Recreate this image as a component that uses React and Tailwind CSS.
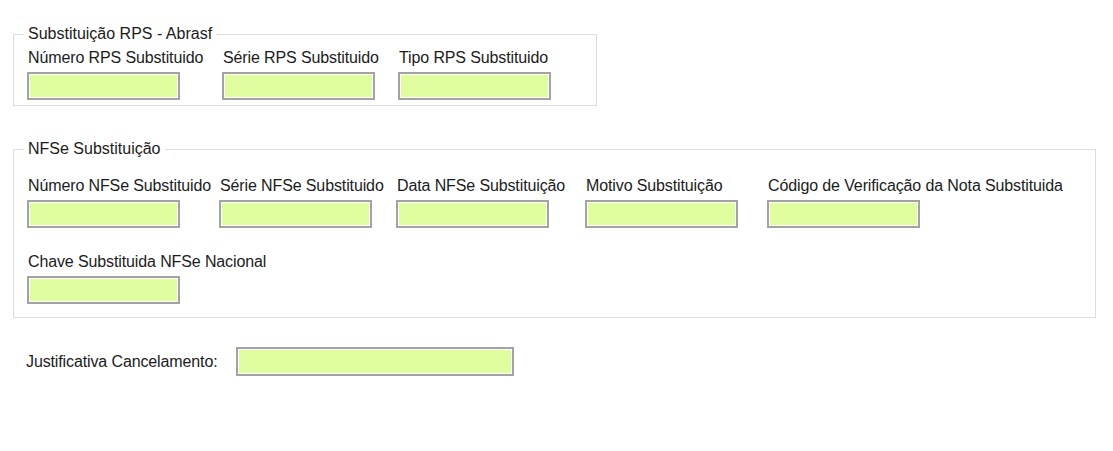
import React from 'react';

const font = { fontFamily: '"Liberation Sans", Arial, sans-serif' };

const Field = ({ label, width }) => (
  <div className={`flex flex-col shrink-0 ${width}`}>
    <span className="text-[16px] leading-[20px] tracking-[-0.12px] whitespace-nowrap pl-[1px]">{label}</span>
    <div className="mt-[4px] w-[153px] h-[28px] border-2 border-[#a3a3a3] bg-[#e0fda0] shadow-[inset_0_0_0_1px_#ffffff]" />
  </div>
);

const Group = ({ title, className, children }) => (
  <fieldset className={`border border-[#dcdcdc] pl-[10px] ${className}`}>
    <legend className="px-[4px] text-[16px] leading-[20px]">{title}</legend>
    {children}
  </fieldset>
);

const App = () => {
  return (
    <div className="w-[1113px] h-[451px] bg-white text-[#1b1b1b] pt-[24px] pl-[13px]" style={font}>
      {/* Substituição RPS */}
      <Group title="Substituição RPS - Abrasf" className="w-[584px] pb-[5px]">
        <div className="flex pl-[3px] pt-[4px]">
          <Field label="Número RPS Substituido" width="w-[195px]" />
          <Field label="Série RPS Substituido" width="w-[176px]" />
          <Field label="Tipo RPS Substituido" width="w-[176px]" />
        </div>
      </Group>

      {/* NFSe Substituição */}
      <Group title="NFSe Substituição" className="w-[1083px] mt-[33px] pb-[13px]">
        <div className="flex pl-[3px] pt-[17px]">
          <Field label="Número NFSe Substituido" width="w-[192px]" />
          <Field label="Série NFSe Substituido" width="w-[177px]" />
          <Field label="Data NFSe Substituição" width="w-[189px]" />
          <Field label="Motivo Substituição" width="w-[182px]" />
          <Field label="Código de Verificação da Nota Substituida" width="w-[300px]" />
        </div>
        <div className="flex pl-[3px] pt-[24px]">
          <Field label="Chave Substituida NFSe Nacional" width="w-[300px]" />
        </div>
      </Group>

      {/* Justificativa */}
      <div className="flex items-center mt-[29px] pl-[13px]">
        <span className="text-[16px] leading-[20px] tracking-[-0.12px] w-[210px] whitespace-nowrap">Justificativa Cancelamento:</span>
        <div className="w-[278px] h-[29px] border-2 border-[#a3a3a3] bg-[#e0fda0] shadow-[inset_0_0_0_1px_#ffffff]" />
      </div>
    </div>
  );
};

export default App;
